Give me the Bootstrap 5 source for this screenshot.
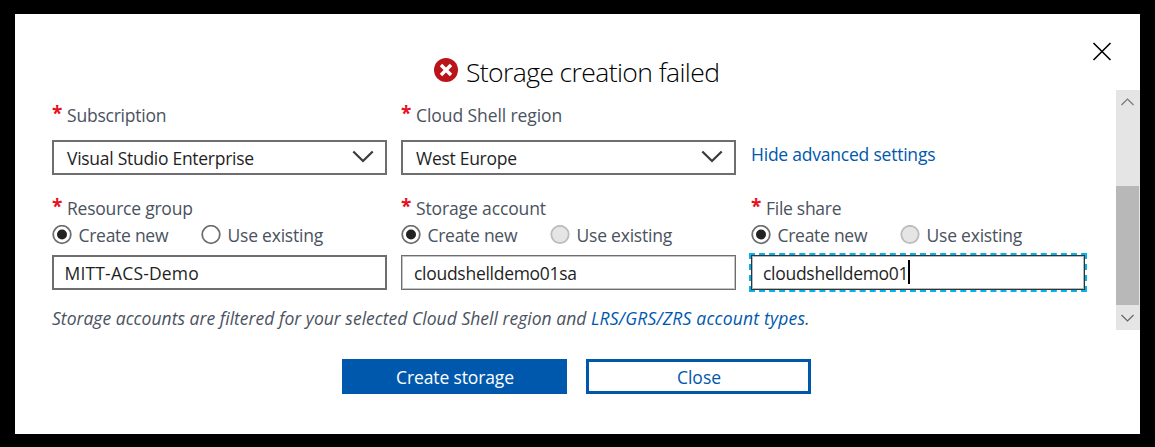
<!DOCTYPE html>
<html lang="en">
<head>
<meta charset="utf-8">
<title>Storage creation failed</title>
<link href="https://cdn.jsdelivr.net/npm/bootstrap@5.3.0/dist/css/bootstrap.min.css" rel="stylesheet">
<script src="https://cdn.jsdelivr.net/npm/bootstrap@5.3.0/dist/js/bootstrap.bundle.min.js"></script>
<style>
body{background:#000;font-family:"Open Sans","Noto Sans",sans-serif;font-size:17.5px;line-height:24px;color:#4a5260;padding:14px 15px 13px;height:447px;overflow:hidden;white-space:nowrap}
a{color:#0058ad;text-decoration:none}
.dlg{height:420px;background:#fff}
.dlg-head{height:76px;padding:37px 0 0 419px}
.dlg-icon{margin-top:7px}
.dlg-title{font-size:26.5px;line-height:36px;font-weight:300;color:#000;margin:3px 0 0 8px;letter-spacing:-.6px}
.dlg-x{top:27px;right:28px;padding:0;border:0;background:none;line-height:0}
.pane{height:240px}
.fields{width:1101px;padding:13px 0 0 37px}
.cols{display:grid;grid-template-columns:349px 350px 334px}
.cols-radio{margin-top:3px}
.cols-input{margin-top:8px}
.cols-second{margin-top:21px}
.req{color:#e81123;font-weight:700;width:15px;font-size:19px;line-height:20px;height:24px}
.box{width:335px;height:35px;border:2px solid #6e6e70;color:#1f1f1f;padding:1px 0 0 10.5px}
.sel{padding-left:13px;padding-right:11px;margin-top:13px}
.sel svg{margin-top:-3px}
.thin{border:1px solid #6e6e70;box-shadow:inset 0 0 0 1px #c4c4c6;padding-left:12px}
.focus{border:1px solid #333;outline:2px dashed #00b4f0;outline-offset:0;width:334px;padding-left:11px;box-shadow:inset 0 0 0 1px #b8b8b8}
.caret{width:2px;height:24px;background:#000;margin-top:-3px}
.rad{width:20px;height:20px;margin:2px 6.5px 0 0;flex:none}
.opt{width:149px}
.adv{padding-top:39px;margin-bottom:-1px}
.note{margin-top:16px;font-style:italic;letter-spacing:.02px}
.note a{letter-spacing:.2px}
.t1{letter-spacing:-.08px}
.t2{letter-spacing:-.13px}
.t3{letter-spacing:-.22px}
.t4{letter-spacing:-.28px}
.tw{letter-spacing:.18px}
.bar{width:24px;background:#e5e5e5}
.bar svg{display:block}
.thumb{height:119px;width:23px;background:#b8b8b8;margin-top:72px}
.foot{gap:19px;padding:29px 0 0 327px}
.act{width:225px;height:35px;border:3px solid #0058ad;border-radius:0;padding:1px 0 0 1px;font-size:17.5px;line-height:28px;color:#0058ad;background:#fff}
.act-main{background:#0058ad;color:#fff}
</style>
</head>
<body>
<svg class="d-none">
<symbol id="on" viewBox="0 0 20 20"><circle cx="10" cy="9.5" r="8.8" fill="#fff" stroke="#6e6e70" stroke-width="1.8"/><circle cx="10" cy="9.5" r="5" fill="#222"/></symbol>
<symbol id="off" viewBox="0 0 20 20"><circle cx="10" cy="9.5" r="8.8" fill="#fff" stroke="#6e6e70" stroke-width="1.8"/></symbol>
<symbol id="dis" viewBox="0 0 20 20"><circle cx="10" cy="9.5" r="8.7" fill="#e5e5e5" stroke="#bcbcbc" stroke-width="1.8"/></symbol>
<symbol id="chev" viewBox="0 0 22 13"><path d="M1.300 1.500L11 11 20.700 1.500" fill="none" stroke="#3c3c3c" stroke-width="2.3"/></symbol>
</svg>
<main class="dlg position-relative">
<header class="dlg-head d-flex align-items-start">
<svg class="dlg-icon" width="24" height="24" viewBox="0 0 24 24"><circle cx="12" cy="12" r="12" fill="#ba141a"/><path d="M7 7l10 10M17 7L7 17" stroke="#fff" stroke-width="3.4"/></svg>
<h1 class="dlg-title">Storage creation failed</h1>
<button class="dlg-x position-absolute" aria-label="Close dialog"><svg width="20" height="20" viewBox="0 0 20 20"><path d="M1.500 2l17 17M18.500 2l-17 17" stroke="#000" stroke-width="1.6"/></svg></button>
</header>
<div class="pane d-flex">
<section class="fields">
<div class="cols">
<div><div class="d-flex"><span class="req">*</span><span class="t3">Subscription</span></div>
<div class="box sel d-flex align-items-center justify-content-between"><span class="t4">Visual Studio Enterprise</span><svg width="22" height="13"><use href="#chev"/></svg></div></div>
<div><div class="d-flex"><span class="req">*</span><span class="t1">Cloud Shell region</span></div>
<div class="box sel d-flex align-items-center justify-content-between"><span class="t4">West Europe</span><svg width="22" height="13"><use href="#chev"/></svg></div></div>
<div class="adv"><a href="#" class="t3">Hide advanced settings</a></div>
</div>
<div class="cols cols-second">
<div class="d-flex"><span class="req">*</span><span class="t3">Resource group</span></div>
<div class="d-flex"><span class="req">*</span><span class="t2">Storage account</span></div>
<div class="d-flex"><span class="req">*</span><span class="t4">File share</span></div>
</div>
<div class="cols cols-radio">
<div class="d-flex"><div class="opt d-flex"><svg class="rad"><use href="#on"/></svg><span class="t4">Create new</span></div><div class="d-flex"><svg class="rad"><use href="#off"/></svg><span class="t3">Use existing</span></div></div>
<div class="d-flex"><div class="opt d-flex"><svg class="rad"><use href="#on"/></svg><span class="t4">Create new</span></div><div class="d-flex"><svg class="rad"><use href="#dis"/></svg><span class="t3">Use existing</span></div></div>
<div class="d-flex"><div class="opt d-flex"><svg class="rad"><use href="#on"/></svg><span class="t4">Create new</span></div><div class="d-flex"><svg class="rad"><use href="#dis"/></svg><span class="t3">Use existing</span></div></div>
</div>
<div class="cols cols-input">
<div class="box d-flex align-items-center"><span class="tw">MITT-ACS-Demo</span></div>
<div class="box thin d-flex align-items-center"><span class="t4">cloudshelldemo01sa</span></div>
<div class="box focus d-flex align-items-center"><span class="t4">cloudshelldemo01</span><i class="caret"></i></div>
</div>
<div class="note">Storage accounts are filtered for your selected Cloud Shell region and <a href="#">LRS/GRS/ZRS account types</a>.</div>
</section>
<div class="bar d-flex flex-column"><svg width="24" height="24" viewBox="0 0 24 24"><path d="M5.500 15L11.500 9l6 6" fill="none" stroke="#777" stroke-width="1.2"/></svg><div class="thumb"></div><svg width="24" height="24" viewBox="0 0 24 24"><path d="M5.500 10l6 6 6-6" fill="none" stroke="#666" stroke-width="1.2"/></svg></div>
</div>
<footer class="foot d-flex"><button class="btn act act-main t2">Create storage</button><button class="btn act">Close</button></footer>
</main>
</body>
</html>
